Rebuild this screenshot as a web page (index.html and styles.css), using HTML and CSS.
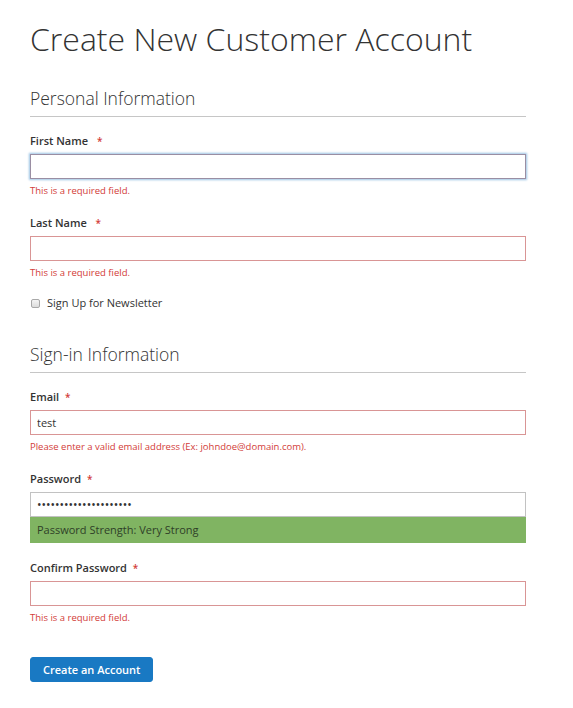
FILE: index.html
```html
<!DOCTYPE html>
<html lang="en">
<head>
    <meta charset="UTF-8">
    <meta name="viewport" content="width=device-width, initial-scale=1.0">
    <title>Create New Customer Account</title>
    <link rel="stylesheet" href="styles.css">
</head>
<body>
    <main class="page">
        <h1 class="page-title">Create New Customer Account</h1>
        <form class="form-create-account">
            <fieldset class="fieldset">
                <legend class="legend">Personal Information</legend>
                <div class="field">
                    <label class="label" for="firstname">First Name <span class="req wide">*</span></label>
                    <input type="text" id="firstname" class="input-text is-error is-focus">
                    <div class="mage-error">This is a required field.</div>
                </div>
                <div class="field">
                    <label class="label" for="lastname">Last Name <span class="req wide">*</span></label>
                    <input type="text" id="lastname" class="input-text is-error">
                    <div class="mage-error">This is a required field.</div>
                </div>
                <div class="field choice">
                    <input type="checkbox" id="newsletter" class="checkbox">
                    <label for="newsletter" class="choice-label">Sign Up for Newsletter</label>
                </div>
            </fieldset>

            <fieldset class="fieldset">
                <legend class="legend">Sign-in Information</legend>
                <div class="field">
                    <label class="label" for="email">Email <span class="req">*</span></label>
                    <input type="text" id="email" class="input-text is-error" value="test">
                    <div class="mage-error">Please enter a valid email address (Ex: johndoe@domain.com).</div>
                </div>
                <div class="field">
                    <label class="label" for="password">Password <span class="req">*</span></label>
                    <input type="password" id="password" class="input-text pass" value="aaaaaaaaaaaaaaaaaaaaa">
                    <div class="strength-meter">Password Strength: Very Strong</div>
                </div>
                <div class="field">
                    <label class="label" for="confirm">Confirm Password <span class="req">*</span></label>
                    <input type="password" id="confirm" class="input-text is-error">
                    <div class="mage-error">This is a required field.</div>
                </div>
            </fieldset>

            <div class="actions">
                <button type="button" class="btn-primary">Create an Account</button>
            </div>
        </form>
    </main>
</body>
</html>
```

FILE: styles.css
```css
* {
    padding: 0;
    margin: 0;
    box-sizing: border-box;
}

body {
    background: #fff;
    color: #333;
    font-family: "Open Sans", "Liberation Sans", sans-serif;
}

.page {
    width: 496px;
    margin-left: 30px;
    padding-top: 17px;
}

.page-title {
    font-size: 32px;
    font-weight: 300;
    line-height: 44px;
    white-space: nowrap;
    color: #333;
    margin-bottom: 25px;
}

.fieldset {
    border: none;
    margin-bottom: 16px;
}

.legend {
    display: block;
    width: 100%;
    font-size: 17.5px;
    font-weight: 300;
    line-height: 24px;
    padding-bottom: 6px;
    border-bottom: 1px solid #c6c6c6;
    margin-bottom: 15px;
}

.field {
    margin-bottom: 16px;
}

.label {
    display: block;
    font-size: 11px;
    font-weight: 600;
    line-height: 18px;
    height: 18px;
    margin-bottom: 4px;
}

.req {
    color: #d23c38;
    font-size: 10px;
    margin-left: 3px;
}

.req.wide {
    margin-left: 6px;
}

.input-text {
    display: block;
    width: 100%;
    height: 25px;
    padding: 0 6px;
    border: 1px solid #c2c2c2;
    font-family: inherit;
    font-size: 11px;
    color: #333;
    background: #fff;
    outline: none;
}

.input-text.pass {
    font-size: 12px;
}

.input-text.is-error {
    border-color: #d99595;
}

.input-text.is-focus {
    border-color: #9a8ea3;
    box-shadow: 0 0 2px 1px #9cc3e4;
}

.mage-error {
    margin-top: 5px;
    font-size: 9.5px;
    line-height: 14px;
    color: #d23c38;
}

.strength-meter {
    height: 26px;
    line-height: 26px;
    padding: 0 7px;
    background: #80b462;
    font-size: 11px;
    color: #2f3f28;
}

.choice {
    display: flex;
    align-items: center;
    gap: 7px;
    height: 14px;
}

.checkbox {
    appearance: none;
    width: 9px;
    height: 9px;
    margin-left: 1px;
    border: 1px solid #a8a8a8;
    border-radius: 2px;
    background: linear-gradient(#f4f4f4, #dcdcdc);
}

.choice-label {
    font-size: 11px;
    line-height: 14px;
}

.btn-primary {
    background: #1979c3;
    border: 1px solid #1979c3;
    color: #fff;
    font-family: inherit;
    font-size: 11px;
    font-weight: 600;
    height: 25px;
    padding: 0 12px;
    border-radius: 3px;
    cursor: pointer;
}
```
